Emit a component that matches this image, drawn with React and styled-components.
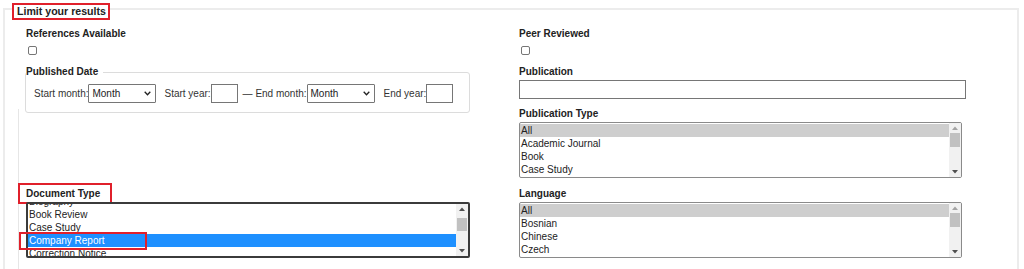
import React from 'react';
import styled, { createGlobalStyle } from 'styled-components';

const GlobalStyle = createGlobalStyle`
  html, body {
    margin: 0;
    padding: 0;
    background: #ffffff;
  }
  body {
    font-family: "Liberation Sans", Arial, sans-serif;
    color: #222222;
  }
`;

const Page = styled.div`
  box-sizing: border-box;
  height: 269px;
  padding: 8px 5px 0 3px;
  overflow: hidden;
`;

const Panel = styled.section`
  position: relative;
  box-sizing: border-box;
  height: 100%;
  border: 2px solid #ececec;
  border-bottom: none;
`;

const PanelLegend = styled.h2`
  position: absolute;
  left: 7px;
  top: -7px;
  margin: 0;
  padding: 0 2px 0 3px;
  background: #ffffff;
  border: 2px solid #e0202b;
  font-size: 10.6px;
  line-height: 13px;
  font-weight: bold;
  color: #222222;
`;

const Grid = styled.div`
  position: relative;
  display: grid;
  grid-template-columns: 446px 447px;
  column-gap: 47px;
  row-gap: 10px;
  padding: 18px 0 0 21px;

  &::before {
    content: '';
    position: absolute;
    left: 13px;
    top: 99px;
    bottom: -20px;
    width: 1px;
    background: #e6e6e6;
  }
`;

const Stack = styled.div`
  display: flex;
  flex-direction: column;
  align-items: flex-start;
`;

const Field = styled.div`
  display: flex;
  flex-direction: column;
  align-items: flex-start;
  margin-bottom: ${p => p.$after || 0}px;
`;

const FieldLabel = styled.label`
  position: relative;
  display: inline-block;
  font-size: 10px;
  line-height: 12px;
  font-weight: bold;
  color: #222222;
  margin-bottom: 2px;

  ${p => p.$marked && `
    &::after {
      content: '';
      position: absolute;
      top: -5px;
      left: -8px;
      right: -12px;
      bottom: -4px;
      border: 2px solid #e0202b;
      pointer-events: none;
    }
  `}
`;

const Check = styled.input`
  appearance: none;
  box-sizing: border-box;
  width: 9px;
  height: 9px;
  margin: 4px 0 0 2px;
  border: 1px solid #767676;
  border-radius: 2px;
  background: #ffffff;
`;

const DateSet = styled.fieldset`
  box-sizing: border-box;
  width: 445px;
  margin: 0 0 0 -1px;
  padding: 0;
  min-width: 0;
  border: 1px solid #dcdcdc;
  border-radius: 3px;
`;

const DateLegend = styled.legend`
  padding: 0 5px 0 0;
  font-size: 10px;
  line-height: 12px;
  font-weight: bold;
  color: #222222;
`;

const DateRow = styled.div`
  display: flex;
  align-items: center;
  padding: 6px 0 9px 8px;
  font-size: 10px;
  color: #333333;
`;

const DateText = styled.span`
  white-space: pre;
  line-height: 19px;
`;

const DateGroup = styled.div`
  display: flex;
  align-items: center;
  margin-right: ${p => p.$after || 0}px;
`;

const MonthSelect = styled.div`
  box-sizing: border-box;
  display: flex;
  align-items: center;
  justify-content: space-between;
  width: 68px;
  height: 19px;
  padding: 0 4px 0 3px;
  border: 1px solid #767676;
  border-radius: 1px;
  background: #ffffff;
  color: #222222;
  font-size: 10px;
`;

const YearInput = styled.input`
  box-sizing: border-box;
  width: 27px;
  height: 19px;
  margin: 0;
  padding: 0;
  border: 1px solid #767676;
  background: #ffffff;
`;

const TextInput = styled.input`
  box-sizing: border-box;
  width: 447px;
  height: 19px;
  margin: 0;
  padding: 0 2px;
  border: 1px solid #767676;
  background: #ffffff;
`;

const ListFrame = styled.div`
  position: relative;
  width: ${p => p.$width}px;
`;

const ListBox = styled.div`
  box-sizing: border-box;
  display: flex;
  height: 56px;
  border: ${p => (p.$focused ? '2px solid #3b3b3b' : '1px solid #8a8a8a')};
  border-radius: 2px;
  overflow: hidden;
  background: #ffffff;
`;

const Options = styled.div`
  flex: 1;
  min-width: 0;
  padding-top: ${p => p.$pad || 0}px;
  margin-top: ${p => -(p.$scroll || 0)}px;
`;

const Option = styled.div`
  height: 13px;
  line-height: 13px;
  padding-left: 1px;
  font-size: 10px;
  white-space: nowrap;
  background: ${p => (p.$selected ? (p.$focused ? '#1e90ff' : '#cecece') : 'transparent')};
  color: ${p => (p.$selected && p.$focused ? '#ffffff' : '#222222')};
`;

const Scrollbar = styled.div`
  display: flex;
  flex-direction: column;
  width: 12px;
  flex: none;
  background: #f1f1f1;
`;

const ScrollButton = styled.div`
  display: flex;
  align-items: center;
  justify-content: center;
  height: 10px;
  flex: none;
`;

const Track = styled.div`
  flex: 1;
  padding-top: ${p => p.$thumbTop}px;
`;

const Thumb = styled.div`
  height: ${p => p.$size}px;
  margin: 0 1px;
  background: #c1c1c1;
`;

const Callout = styled.div`
  position: absolute;
  left: ${p => p.$left}px;
  top: ${p => p.$top}px;
  width: ${p => p.$w}px;
  height: ${p => p.$h}px;
  box-sizing: border-box;
  border: 2px solid #e0202b;
  pointer-events: none;
`;

function Arrow({ up, color }) {
  return (
    <svg width="6" height="4" viewBox="0 0 6 4">
      <path d={up ? 'M0 4 L3 0.5 L6 4 Z' : 'M0 0 L3 3.5 L6 0 Z'} fill={color} />
    </svg>
  );
}

function Chevron() {
  return (
    <svg width="7" height="5" viewBox="0 0 7 5">
      <path d="M0.7 0.8 L3.5 3.8 L6.3 0.8" fill="none" stroke="#222" strokeWidth="1.3" />
    </svg>
  );
}

function ListSelect({ width, items, selected, focused, scroll, pad, thumbTop, thumbSize, atTop, children }) {
  return (
    <ListFrame $width={width}>
      <ListBox $focused={focused}>
        <Options $scroll={scroll} $pad={pad}>
          {items.map(item => (
            <Option key={item} $selected={item === selected} $focused={focused}>
              {item}
            </Option>
          ))}
        </Options>
        <Scrollbar>
          <ScrollButton>
            <Arrow up color={atTop ? '#a3a3a3' : '#505050'} />
          </ScrollButton>
          <Track $thumbTop={thumbTop}>
            <Thumb $size={thumbSize} />
          </Track>
          <ScrollButton>
            <Arrow color="#505050" />
          </ScrollButton>
        </Scrollbar>
      </ListBox>
      {children}
    </ListFrame>
  );
}

const docTypes = ['Biography', 'Book Review', 'Case Study', 'Company Report', 'Correction Notice', 'Editorial'];
const pubTypes = ['All', 'Academic Journal', 'Book', 'Case Study', 'Conference Paper'];
const languages = ['All', 'Bosnian', 'Chinese', 'Czech', 'Dutch/Flemish'];

export default function App() {
  return (
    <Page>
      <GlobalStyle />
      <Panel>
        <PanelLegend>Limit your results</PanelLegend>
        <Grid>
          <Stack>
            <Field $after={11}>
              <FieldLabel>References Available</FieldLabel>
              <Check type="checkbox" />
            </Field>
            <DateSet>
              <DateLegend>Published Date</DateLegend>
              <DateRow>
                <DateGroup $after={8}>
                  <DateText>Start month:</DateText>
                  <MonthSelect>
                    <span>Month</span>
                    <Chevron />
                  </MonthSelect>
                </DateGroup>
                <DateGroup $after={5}>
                  <DateText>Start year:</DateText>
                  <YearInput type="text" />
                </DateGroup>
                <DateGroup $after={9}>
                  <DateText>— End month:</DateText>
                  <MonthSelect>
                    <span>Month</span>
                    <Chevron />
                  </MonthSelect>
                </DateGroup>
                <DateGroup>
                  <DateText>End year:</DateText>
                  <YearInput type="text" />
                </DateGroup>
              </DateRow>
            </DateSet>
          </Stack>

          <Stack>
            <Field $after={11}>
              <FieldLabel>Peer Reviewed</FieldLabel>
              <Check type="checkbox" />
            </Field>
            <Field $after={9}>
              <FieldLabel>Publication</FieldLabel>
              <TextInput type="text" />
            </Field>
            <Field>
              <FieldLabel>Publication Type</FieldLabel>
              <ListSelect
                width={443}
                items={pubTypes}
                selected="All"
                pad={1}
                thumbTop={0}
                thumbSize={14}
                atTop
              />
            </Field>
          </Stack>

          <Stack>
            <Field>
              <FieldLabel $marked>Document Type</FieldLabel>
              <ListSelect
                width={444}
                items={docTypes}
                selected="Company Report"
                focused
                scroll={9}
                thumbTop={4}
                thumbSize={13}
              >
                <Callout $left={-7} $top={30} $w={128} $h={18} />
              </ListSelect>
            </Field>
          </Stack>

          <Stack>
            <Field>
              <FieldLabel>Language</FieldLabel>
              <ListSelect
                width={443}
                items={languages}
                selected="All"
                pad={1}
                thumbTop={0}
                thumbSize={14}
                atTop
              />
            </Field>
          </Stack>
        </Grid>
      </Panel>
    </Page>
  );
}
